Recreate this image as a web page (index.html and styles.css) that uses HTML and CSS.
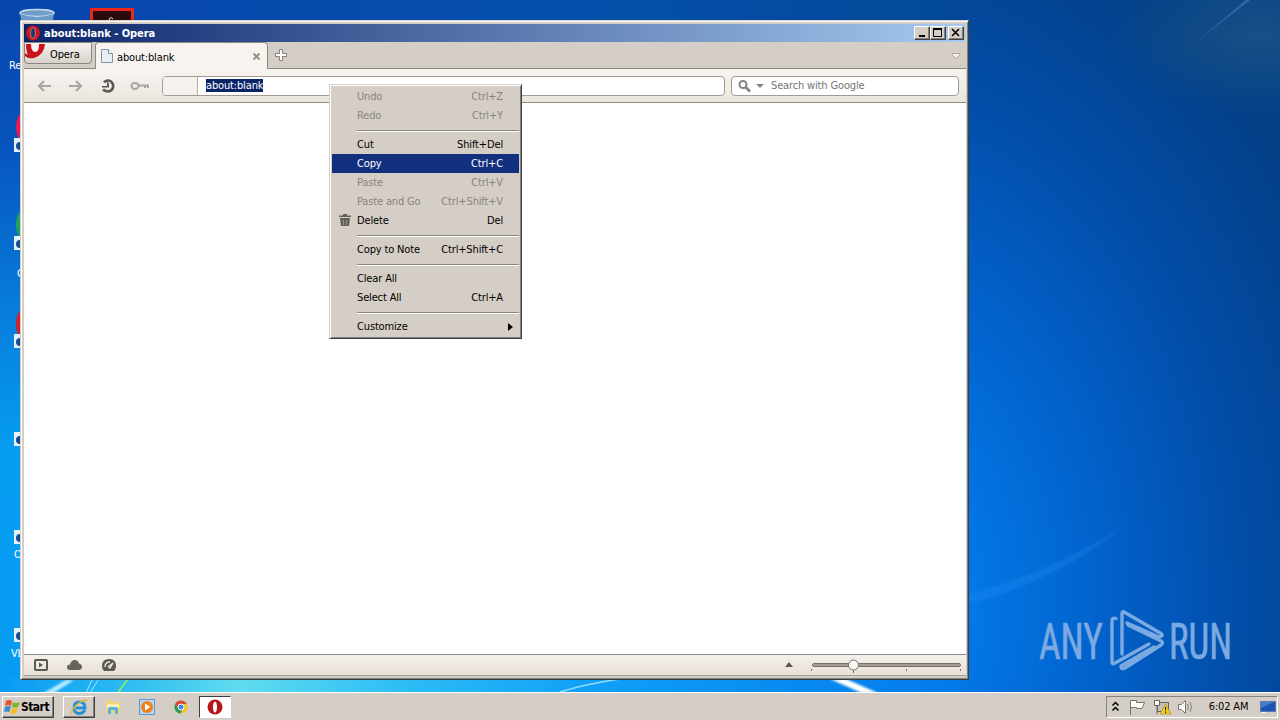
FILE: index.html
```
<!DOCTYPE html>
<html lang="en">

  <head>
    <meta charset="UTF-8" />
    <title>about:blank - Opera</title>
    <link rel="stylesheet" href="styles.css">
  </head>

  <body>
  <div class="desktop">

    <!-- Wallpaper -->
    <svg class="wallpaper" width="1280" height="720" viewBox="0 0 1280 720">
      <defs>
        <linearGradient id="leftStrip" x1="0" y1="0" x2="0" y2="1">
          <stop offset="0" stop-color="#0846ad" />
          <stop offset=".2" stop-color="#0754bd" />
          <stop offset=".45" stop-color="#0780de" />
          <stop offset=".62" stop-color="#069cf0" />
          <stop offset="1" stop-color="#079cf3" />
        </linearGradient>
        <linearGradient id="topStrip" x1="0" y1="0" x2="1" y2="0">
          <stop offset="0" stop-color="#0846ad" />
          <stop offset=".6" stop-color="#0650ad" />
          <stop offset="1" stop-color="#034998" />
        </linearGradient>
        <linearGradient id="bottomStrip" x1="0" y1="0" x2="1" y2="0">
          <stop offset="0" stop-color="#0899f5" />
          <stop offset=".1" stop-color="#22b3f2" />
          <stop offset=".25" stop-color="#5fdcee" />
          <stop offset=".42" stop-color="#2dbdf5" />
          <stop offset=".62" stop-color="#0f9ff8" />
          <stop offset="1" stop-color="#0479ea" />
        </linearGradient>
        <radialGradient id="rightSide" gradientUnits="userSpaceOnUse" cx="860" cy="600" r="720" gradientTransform="translate(860 600) scale(.72 1) translate(-860 -600)">
          <stop offset="0" stop-color="#0587f5" />
          <stop offset=".2" stop-color="#0379e8" />
          <stop offset=".45" stop-color="#0263cd" />
          <stop offset=".75" stop-color="#024ca6" />
          <stop offset="1" stop-color="#034088" />
        </radialGradient>
        <radialGradient id="corner">
          <stop offset="0" stop-color="#185086" />
          <stop offset="1" stop-color="#185086" stop-opacity="0" />
        </radialGradient>
        <linearGradient id="ray" x1="0" y1="1" x2="1" y2="0">
          <stop offset="0" stop-color="#4b86c4" stop-opacity="0" />
          <stop offset="1" stop-color="#4b86c4" stop-opacity=".6" />
        </linearGradient>
        <filter id="soft"><feGaussianBlur stdDeviation="1.2" /></filter>
      </defs>
      <rect width="960" height="720" fill="url(#leftStrip)" />
      <rect width="960" height="26" fill="url(#topStrip)" />
      <rect y="676" width="960" height="20" fill="url(#bottomStrip)" />
      <rect x="960" width="320" height="720" fill="url(#rightSide)" />
      <ellipse cx="1260" cy="35" rx="150" ry="80" fill="url(#corner)" />
      <path d="M1180 55L1246 0H1250Z" fill="url(#ray)" />
      <path d="M968 604Q1060 580 1125 525Q1060 568 968 595Z" fill="#2590f5" opacity=".3" filter="url(#soft)" />
      <path d="M42 694L66 680H74L52 694Z" fill="#b8edff" filter="url(#soft)" />
      <path d="M86 693L92 680M90 693L98 680" stroke="#a5e4fa" />
      <path d="M117 694L128 679" stroke="#8be878" stroke-width="2" />
      <path d="M560 692Q585 684 620 679" stroke="#8fdcfb" stroke-width="1.500" fill="none" />
      <path d="M830 679H846L878 693H862Z" fill="#fff" filter="url(#soft)" />
    </svg>

    <!-- Desktop icons, mostly hidden by the window -->
    <svg class="shortcuts" width="150" height="680" viewBox="0 0 150 680">
      <ellipse cx="37" cy="13" rx="17" ry="3.500" fill="#6f9fc8" stroke="#c7dbe8" stroke-width="1.500" />
      <path d="M20 14L22 24H52L54 14Q37 20 20 14Z" fill="#6b9bcb" />
      <rect x="91.500" y="9.500" width="41" height="20" fill="#2b0a0c" stroke="#e8291c" stroke-width="3" />
      <path d="M109 20Q110 16 113 19" stroke="#fff" fill="none" />
      <ellipse cx="27" cy="127" rx="11" ry="17" fill="#e91a55" />
      <ellipse cx="27" cy="225" rx="11" ry="17" fill="#20a45a" />
      <ellipse cx="27" cy="324" rx="11" ry="17" fill="#cf2029" />
      <g fill="#e4f2fa">
        <rect x="14" y="138" width="12" height="14" />
        <rect x="14" y="236" width="12" height="14" />
        <rect x="14" y="334" width="12" height="14" />
        <rect x="14" y="432" width="12" height="14" />
        <rect x="14" y="530" width="12" height="14" />
        <rect x="14" y="628" width="12" height="14" />
      </g>
      <g fill="#174a8e">
        <circle cx="20" cy="146" r="4" /><circle cx="20" cy="244" r="4" />
        <circle cx="20" cy="342" r="4" /><circle cx="20" cy="440" r="4" />
        <circle cx="20" cy="538" r="4" /><circle cx="20" cy="636" r="4" />
      </g>
      <g class="shortcut-text">
        <text x="9" y="69">Re</text>
        <text x="17" y="277">C</text>
        <text x="14" y="558">O</text>
        <text x="11" y="657">VL</text>
      </g>
    </svg>

    <!-- Watermark -->
    <div class="watermark">
      <svg width="230" height="70" viewBox="0 0 230 70">
        <g class="brand-text">
          <text x="1" y="51" textLength="64" lengthAdjust="spacingAndGlyphs">ANY</text>
          <text x="131" y="51" textLength="63" lengthAdjust="spacingAndGlyphs">RUN</text>
        </g>
        <g fill="none" stroke="#7baae2" stroke-width="3.400" stroke-linejoin="round" stroke-linecap="round">
          <path d="M78 10.500Q74 9 74 13V54Q74 57 77 55L111 36" />
          <path d="M84 46V6Q84 2.500 87 4.500L123 25.500Q126 28 121 29L89 15" />
          <path d="M90 17L123 33Q126 35 123 37L87 60Q83 62 83 58L116 39" />
        </g>
      </svg>
    </div>

    <!-- Opera window -->
    <div class="window">
      <div class="title-bar">
        <svg width="16" height="16" viewBox="0 0 16 16">
          <ellipse cx="8" cy="8" rx="7" ry="7.500" fill="#c9171e" />
          <ellipse cx="8" cy="8" rx="2.500" ry="5.500" fill="#29346e" stroke="#f1a49b" stroke-width=".6" />
        </svg>
        <span class="title">about:blank - Opera</span>
        <div class="controls">
          <span class="control"><svg width="14" height="12"><path d="M4 9H10" stroke="#000" stroke-width="2" /></svg></span>
          <span class="control"><svg width="14" height="12"><path d="M2.500 2V9.500H10.500V2" fill="none" stroke="#000" /><path d="M2 2H11" stroke="#000" stroke-width="2" /></svg></span>
          <span class="control close"><svg width="14" height="12"><path d="M3 2L10 9M10 2L3 9" stroke="#000" stroke-width="1.600" /></svg></span>
        </div>
      </div>

      <div class="tab-bar">
        <div class="opera-button">
          <svg width="22" height="18" viewBox="0 0 22 18">
            <path d="M0 1H20Q19 12 9 15Q3 16 0 13Z" fill="#c9141b" />
            <path d="M6 1H14Q14 9 10.500 9Q6 9 6 1Z" fill="#f7f5f3" />
            <path d="M0 1H1Q1 8 3 12L0 10Z" fill="#f5e0dd" />
          </svg>
          <span>Opera</span>
        </div>
        <div class="tab">
          <svg width="14" height="16" viewBox="0 0 14 16">
            <path d="M1.500 1.500H8.500L12.500 5.500V14.500H1.500Z" fill="#e8eef6" stroke="#8793a3" />
            <path d="M8.500 1.500V5.500H12.500" fill="#fff" stroke="#8793a3" />
          </svg>
          <span class="tab-title">about:blank</span>
          <svg width="9" height="9" viewBox="0 0 9 9"><path d="M1.500 1.500L7.500 7.500M7.500 1.500L1.500 7.500" stroke="#918c87" stroke-width="1.800" /></svg>
        </div>
        <svg class="new-tab" width="14" height="14" viewBox="0 0 14 14">
          <path d="M5.500 1.500H8.500V5.500H12.500V8.500H8.500V12.500H5.500V8.500H1.500V5.500H5.500Z" fill="#fff" stroke="#85807b" />
        </svg>
        <svg class="tab-menu" width="10" height="8" viewBox="0 0 10 8">
          <path d="M1 1.500H9V3L5 6.500L1 3Z" fill="#f4f1ed" stroke="#aaa39b" />
        </svg>
      </div>

      <div class="toolbar">
        <svg class="nav" width="126" height="20" viewBox="0 0 126 20">
          <g fill="none" stroke="#aaa6a1" stroke-width="2.200">
            <path d="M24 10H12M17 5L12 10L17 15" />
            <path d="M42 10H54M49 5L54 10L49 15" />
          </g>
          <path d="M77 6.500C79 4 82 4 84 5.500C88 9 86 15 81.500 15.500Q78 15.500 76 13.500" fill="none" stroke="#5c5956" stroke-width="2.600" />
          <path d="M75 11.500V10H80V5.500L82 7.500V11.500Z" fill="#5c5956" />
          <g fill="none" stroke="#aaa6a1" stroke-width="2">
            <ellipse cx="108" cy="10" rx="3.500" ry="3" />
            <path d="M111.500 9.500H122M118 10V12M121 10V12" />
          </g>
        </svg>
        <div class="address">
          <div class="badge"></div>
          <span class="selected">about:blank</span>
        </div>
        <div class="search">
          <svg width="28" height="14" viewBox="0 0 28 14">
            <circle cx="5" cy="5.500" r="3.500" fill="none" stroke="#85817d" stroke-width="2" />
            <path d="M7.500 8L12 12.500" stroke="#85817d" stroke-width="2.600" />
            <path d="M18 5H26L22 9Z" fill="#85817d" />
          </svg>
          <span>Search with Google</span>
        </div>
      </div>

      <div class="page"></div>

      <div class="status-bar">
        <svg width="90" height="14" viewBox="0 0 90 14">
          <rect x="2" y="2" width="12" height="10" rx="1" fill="none" stroke="#5c5854" stroke-width="2" />
          <path d="M6 4.500L10 7L6 9.500Z" fill="#5c5854" />
          <path d="M37 12Q34 12 34 9Q34 6.500 37 6.500Q38 2 42 2Q45 2 46 5.500Q49 6 49 9Q49 12 45 12Z" fill="#67635e" />
          <path d="M71 13Q69 11 69 8Q69 1 76 1Q83 1 83 8Q83 11 81 13Z" fill="#5c5854" />
          <path d="M72 9Q72 4 77 4M80 5L75.500 8.500L77 10Z" fill="none" stroke="#eee8e1" stroke-width="1.400" />
        </svg>
        <svg class="zoom" width="180" height="18" viewBox="0 0 180 18">
          <path d="M3 11L7 6L11 11Z" fill="#5c5854" />
          <rect x="30.500" y="7.500" width="148" height="3" rx="1.500" fill="#a39d96" stroke="#77716b" />
          <path d="M29.500 13V15M71.500 14V17M124.500 13V15M178.500 13V15" stroke="#77716b" />
          <circle cx="71.500" cy="9" r="5" fill="#f9f8f7" stroke="#77716b" />
        </svg>
      </div>
    </div>

    <!-- Context menu -->
    <ul class="menu">
      <li class="disabled"><span>Undo</span><span>Ctrl+Z</span></li>
      <li class="disabled"><span>Redo</span><span>Ctrl+Y</span></li>
      <li class="separator"></li>
      <li><span>Cut</span><span>Shift+Del</span></li>
      <li class="active"><span>Copy</span><span>Ctrl+C</span></li>
      <li class="disabled"><span>Paste</span><span>Ctrl+V</span></li>
      <li class="disabled"><span>Paste and Go</span><span>Ctrl+Shift+V</span></li>
      <li>
        <svg class="trash" width="12" height="13" viewBox="0 0 12 13">
          <path d="M0 1.500H4V0H8V1.500H12V3H0ZM1 4H11L10 12H2Z" fill="#625e5a" />
          <path d="M4.500 6V11M7.500 6V11" stroke="#99938c" />
        </svg>
        <span>Delete</span><span>Del</span>
      </li>
      <li class="separator"></li>
      <li><span>Copy to Note</span><span>Ctrl+Shift+C</span></li>
      <li class="separator"></li>
      <li><span>Clear All</span></li>
      <li><span>Select All</span><span>Ctrl+A</span></li>
      <li class="separator"></li>
      <li>
        <span>Customize</span>
        <svg class="arrow" width="5" height="8" viewBox="0 0 5 8"><path d="M0 0L5 4L0 8Z" fill="#000" /></svg>
      </li>
    </ul>

    <!-- Taskbar -->
    <div class="taskbar">
      <div class="start">
        <svg width="17" height="16" viewBox="0 0 17 16">
          <path d="M2 2Q5 0 8 2L7 7Q4 5 1 7Z" fill="#e8542d" />
          <path d="M9 3Q12 5 16 3L14 8Q11 9 8 8Z" fill="#77b82b" />
          <path d="M1 8Q4 6 7 8L5 13Q2 12 0 13Z" fill="#398bd5" />
          <path d="M8 9Q11 10 14 9L12 14Q9 16 6 14Z" fill="#f6bd24" />
        </svg>
        <span>Start</span>
      </div>
      <div class="task ie">
        <svg width="18" height="18" viewBox="0 0 18 18">
          <path d="M15 12Q13 15.500 9.500 15.500Q4 15.500 4 9.500Q4 4 9.500 4Q15 4 15 10H6" fill="none" stroke="#2491db" stroke-width="2.800" />
          <path d="M2 16Q0 12 9 5Q16 0 17 3" fill="none" stroke="#e8b728" stroke-width="1.500" />
        </svg>
      </div>
      <div class="task">
        <svg width="16" height="16" viewBox="0 0 16 16">
          <path d="M1 3L2 1H6L7 3H15V14H1Z" fill="#f1d679" />
          <path d="M2 5H14V9H2Z" fill="#fbf0b5" />
          <path d="M3 15V10Q3 8 5 8H11Q13 8 13 10V15H10V11H6V15Z" fill="#5eb0df" />
        </svg>
      </div>
      <div class="task">
        <svg width="16" height="16" viewBox="0 0 16 16">
          <rect x=".5" y=".5" width="15" height="15" fill="#b7d7f1" stroke="#5d9bd0" />
          <circle cx="8" cy="8" r="6" fill="#ee8217" />
          <path d="M6 4.500L11.500 8L6 11.500Z" fill="#fff" />
        </svg>
      </div>
      <div class="task">
        <svg width="14" height="14" viewBox="0 0 14 14">
          <circle cx="7" cy="7" r="6.500" fill="#f4c51d" />
          <path d="M1.300 3.700A6.500 6.500 0 0 1 12.700 4H7L4.500 8.500Z" fill="#db4637" />
          <path d="M1.300 3.700A6.500 6.500 0 0 0 6.500 13.500L9 9L4.500 8.500Z" fill="#29975a" />
          <circle cx="7" cy="7" r="3" fill="#4384e5" stroke="#fff" />
        </svg>
      </div>
      <div class="task current">
        <svg width="16" height="16" viewBox="0 0 16 16">
          <ellipse cx="8" cy="8" rx="7.500" ry="7.500" fill="#b8141b" />
          <ellipse cx="8" cy="8" rx="2" ry="5.500" fill="#fff" />
        </svg>
      </div>

      <div class="tray">
        <svg width="86" height="18" viewBox="0 0 86 18">
          <path d="M1.500 7.500L4.500 4.500L7.500 7.500M1.500 12.500L4.500 9.500L7.500 12.500" fill="none" stroke="#000" stroke-width="1.500" />
          <path d="M19.500 17V2.500H25.500V4.500H33.500L31 10.500H25.500V9.500H19.500" fill="#fff" stroke="#77736f" />
          <rect x="46.500" y="4.500" width="11" height="9" fill="#c4c0bc" stroke="#666" />
          <path d="M43.500 2.500H48.500V7.500H43.500ZM46 7.500V16" fill="#fff" stroke="#66625e" />
          <path d="M54.500 6L60 16H49Z" fill="#f2cc18" stroke="#a78d12" stroke-width=".6" />
          <path d="M54.500 9V12.500M54.500 13.500V15" stroke="#222" />
          <path d="M67.500 6.500H70.500L74.500 2.500V15.500L70.500 11.500H67.500Z" fill="#fff" stroke="#77736f" />
          <path d="M76.500 6Q78 9 76.500 12M79 4Q82 9 79 14" fill="none" stroke="#85817d" />
        </svg>
        <span class="clock">6:02 AM</span>
        <svg width="16" height="14" viewBox="0 0 16 14">
          <rect x=".5" y="1.500" width="15" height="10" fill="#1c55b5" stroke="#5c7ca8" />
          <path d="M1 2H14L1 8Z" fill="#477bcb" />
          <path d="M2 12.500H5" stroke="#fff" />
        </svg>
      </div>
    </div>

  </div>
  </body>
</html>
```
FILE: styles.css
```
body {
  margin: 0;
  font-family: "DejaVu Sans Condensed", "DejaVu Sans", sans-serif;
  font-stretch: condensed;
  font-size: 11px;
  letter-spacing: -0.15px;
  color: #000000;
}

svg {
  display: block;
  flex: none;
}

.desktop {
  position: relative;
  display: flex;
  flex-direction: column;
  justify-content: flex-end;
  width: 1280px;
  height: 720px;
  overflow: hidden;
}

.wallpaper,
.shortcuts {
  position: absolute;
  top: 0;
  left: 0;
}

.shortcut-text {
  fill: #FFFFFF;
}

.watermark {
  position: absolute;
  left: 1038px;
  top: 608px;
}

.brand-text {
  fill: #7BAAE2;
  stroke: #7BAAE2;
  stroke-width: 0.6px;
  font-family: Roboto, sans-serif;
  font-size: 50px;
  letter-spacing: 0;
}

/* Window */
.window {
  position: absolute;
  left: 20px;
  top: 20px;
  box-sizing: border-box;
  width: 949px;
  height: 660px;
  padding: 2px 2px 3px 3px;
  display: flex;
  flex-direction: column;
  background: #D5CEC6;
  border: 1px solid;
  border-color: #D5CEC6 #404040 #404040 #D5CEC6;
  box-shadow: inset 1px 1px #FFFFFF, inset -1px -1px #808080;
}

.title-bar {
  display: flex;
  align-items: center;
  height: 18px;
  margin: 1px 1px 0 0;
  padding: 0 1px;
  background: linear-gradient(to right, #0A246A, #A6CAF0);
  color: #FFFFFF;
}

.title {
  margin-left: 3px;
  font-weight: bold;
  letter-spacing: -0.03px;
}

.controls {
  display: flex;
  margin-left: auto;
}

.control {
  width: 14px;
  height: 12px;
  background: #D5CEC6;
  border: 1px solid;
  border-color: #FFFFFF #404040 #404040 #FFFFFF;
  box-shadow: inset -1px -1px #808080;
}

.close {
  margin-left: 2px;
}

.tab-bar {
  display: flex;
  height: 26px;
  padding: 0 3px 0 0;
  border-bottom: 1px solid #8D8880;
}

.opera-button {
  box-sizing: border-box;
  display: flex;
  width: 68px;
  height: 22px;
  border: 1px solid #8A857F;
  border-radius: 0 0 4px 4px;
  background: linear-gradient(#F4F2EF, #D8D2CB);
  line-height: 23px;
}

.opera-button span {
  margin-left: 3px;
}

.tab {
  box-sizing: border-box;
  display: flex;
  align-items: center;
  width: 173px;
  height: 27px;
  margin-left: 3px;
  padding: 0 6px 0 4px;
  border: 1px solid #8D8880;
  border-bottom: 0;
  border-radius: 4px 4px 0 0;
  background: #F7F4F0;
}

.tab-title {
  flex: 1;
  margin: 2px 0 0 3px;
}

.new-tab {
  margin: 6px 0 0 6px;
}

.tab-menu {
  margin: 10px 2px 0 auto;
}

.toolbar {
  display: flex;
  align-items: center;
  height: 33px;
  padding-right: 7px;
  background: linear-gradient(#F7F4F0, #ECE5DD);
  border-bottom: 1px solid #918C86;
}

.nav {
  margin-left: 3px;
}

.address,
.search {
  box-sizing: border-box;
  display: flex;
  align-items: center;
  height: 20px;
  border: 1px solid #A09B95;
  border-radius: 4px;
  background: #FFFFFF;
}

.address {
  width: 563px;
  margin-left: 9px;
}

.badge {
  width: 34px;
  height: 18px;
  border-right: 1px solid #B4AEA8;
  border-radius: 3px 0 0 3px;
  background: #F5F2EE;
}

.selected {
  margin-left: 8px;
  background: #0A246A;
  color: #FFFFFF;
}

.search {
  width: 228px;
  margin-left: auto;
  padding-left: 6px;
  color: #77736F;
}

.search span {
  margin-left: 5px;
}

.page {
  flex: 1;
  background: #FFFFFF;
}

.status-bar {
  display: flex;
  align-items: center;
  height: 20px;
  padding: 0 4px 0 9px;
  border-top: 1px solid #918C86;
  border-bottom: 1px solid #A49E97;
  background: linear-gradient(#F4F0EB, #E9E0D7);
}

.zoom {
  margin-left: auto;
}

/* Context menu */
.menu {
  position: absolute;
  left: 329px;
  top: 84px;
  box-sizing: border-box;
  width: 193px;
  margin: 0;
  padding: 2px;
  list-style: none;
  background: #D5CEC6;
  border: 1px solid;
  border-color: #D5CEC6 #404040 #404040 #D5CEC6;
  box-shadow: inset 1px 1px #FFFFFF, inset -1px -1px #808080;
}

.menu li {
  position: relative;
  display: flex;
  align-items: center;
  justify-content: space-between;
  height: 19px;
  padding: 0 16px 0 25px;
}

.menu .disabled {
  color: #89847F;
}

.menu .active {
  background: #12307E;
  color: #FFFFFF;
}

.menu .separator {
  height: 1px;
  margin: 5px 0 3px 25px;
  padding: 0;
  background: #89847F;
  border-bottom: 1px solid #FFFFFF;
}

.trash {
  position: absolute;
  left: 7px;
}

.menu .arrow {
  margin-right: -10px;
}

/* Taskbar */
.taskbar {
  position: relative;
  box-sizing: border-box;
  display: flex;
  align-items: center;
  height: 28px;
  padding: 1px 2px;
  background: #D5CEC6;
  border-top: 1px solid #FFFFFF;
}

.start,
.task {
  box-sizing: border-box;
  display: flex;
  align-items: center;
  justify-content: center;
  height: 22px;
}

.start,
.ie {
  border: 1px solid;
  border-color: #FFFFFF #404040 #404040 #FFFFFF;
  box-shadow: inset -1px -1px #808080;
}

.start {
  width: 52px;
  margin-right: 9px;
  padding-right: 3px;
  font-size: 12px;
  font-weight: bold;
  letter-spacing: -0.5px;
}

.task {
  width: 32px;
  margin-right: 2px;
}

.current {
  border: 1px solid;
  border-color: #404040 #FFFFFF #FFFFFF #404040;
  background: #FFFFFF;
}

.tray {
  box-sizing: border-box;
  display: flex;
  align-items: center;
  width: 172px;
  height: 22px;
  margin-left: auto;
  padding: 0 1px 0 4px;
  border: 1px solid;
  border-color: #89847F #FFFFFF #FFFFFF #89847F;
}

.clock {
  margin: 0 auto;
}
```
